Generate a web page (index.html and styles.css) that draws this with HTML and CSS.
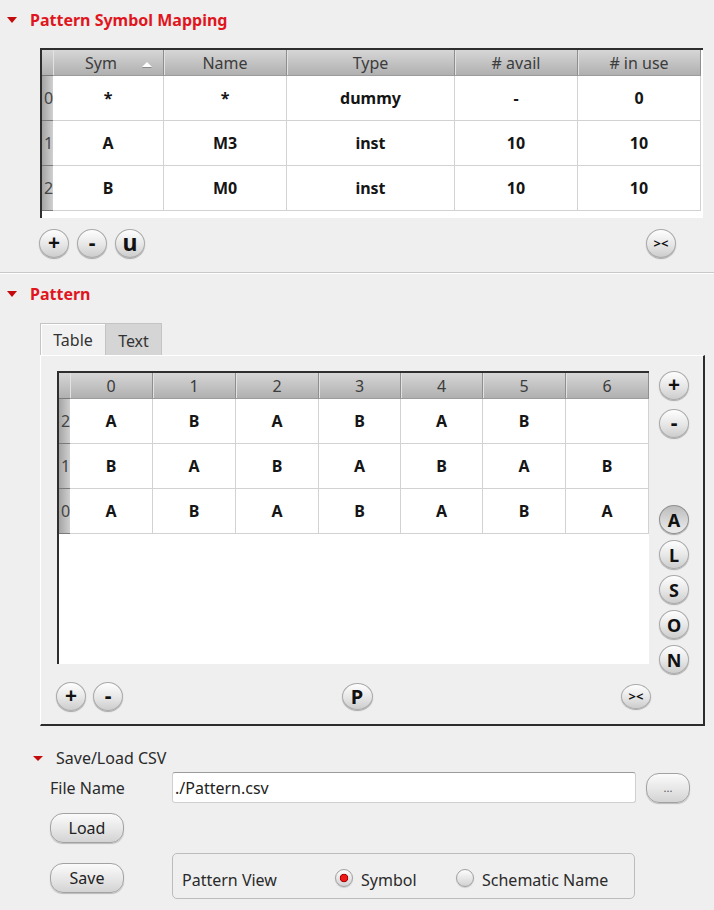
FILE: index.html
```html
<!DOCTYPE html>
<html>
<head>
<meta charset="utf-8">
<title>Pattern</title>
<link rel="stylesheet" href="styles.css">
</head>
<body>
<section class="sec">
  <div class="sec-head"><span class="tri"></span><span class="sec-title">Pattern Symbol Mapping</span></div>
  <div class="frame map-frame">
    <div class="grid map-grid">
      <div class="hcell corner"></div>
      <div class="hcell sortcol">Sym<span class="sort"></span></div>
      <div class="hcell">Name</div>
      <div class="hcell">Type</div>
      <div class="hcell"># avail</div>
      <div class="hcell"># in use</div>

      <div class="rh">0</div>
      <div class="cell">*</div><div class="cell">*</div><div class="cell">dummy</div><div class="cell">-</div><div class="cell">0</div>
      <div class="rh">1</div>
      <div class="cell">A</div><div class="cell">M3</div><div class="cell">inst</div><div class="cell">10</div><div class="cell">10</div>
      <div class="rh">2</div>
      <div class="cell">B</div><div class="cell">M0</div><div class="cell">inst</div><div class="cell">10</div><div class="cell">10</div>
    </div>
  </div>
  <div class="btn-row">
    <span class="rbtn sym">+</span>
    <span class="rbtn sym">-</span>
    <span class="rbtn big">u</span>
    <span class="rbtn swap push">&gt;&lt;</span>
  </div>
</section>

<div class="sep"></div>

<section class="sec">
  <div class="sec-head"><span class="tri"></span><span class="sec-title">Pattern</span></div>
  <div class="tabs">
    <div class="tab on">Table</div>
    <div class="tab off">Text</div>
  </div>
  <div class="pane">
    <div class="pane-main">
      <div class="frame pat-frame">
        <div class="grid pat-grid">
          <div class="hcell corner"></div>
          <div class="hcell">0</div><div class="hcell">1</div><div class="hcell">2</div><div class="hcell">3</div><div class="hcell">4</div><div class="hcell">5</div><div class="hcell">6</div>

          <div class="rh">2</div>
          <div class="cell">A</div><div class="cell">B</div><div class="cell">A</div><div class="cell">B</div><div class="cell">A</div><div class="cell">B</div><div class="cell"></div>
          <div class="rh">1</div>
          <div class="cell">B</div><div class="cell">A</div><div class="cell">B</div><div class="cell">A</div><div class="cell">B</div><div class="cell">A</div><div class="cell">B</div>
          <div class="rh">0</div>
          <div class="cell">A</div><div class="cell">B</div><div class="cell">A</div><div class="cell">B</div><div class="cell">A</div><div class="cell">B</div><div class="cell">A</div>
        </div>
      </div>
      <div class="pane-btns">
        <div class="grp-left">
          <span class="rbtn sym">+</span>
          <span class="rbtn sym">-</span>
        </div>
        <span class="rbtn oval">P</span>
        <div class="grp-right">
          <span class="rbtn swap oval-s">&gt;&lt;</span>
        </div>
      </div>
    </div>
    <div class="pane-side">
      <span class="rbtn sym">+</span>
      <span class="rbtn sym minus2">-</span>
      <span class="rbtn pressed letter-first">A</span>
      <span class="rbtn letter">L</span>
      <span class="rbtn letter">S</span>
      <span class="rbtn letter">O</span>
      <span class="rbtn letter">N</span>
    </div>
  </div>

  <div class="csv-head"><span class="tri small"></span><span class="csv-title">Save/Load CSV</span></div>
  <div class="file-row">
    <span class="lbl">File Name</span>
    <div class="input">./Pattern.csv</div>
    <span class="pill dots">...</span>
  </div>
  <div class="load-row"><span class="pill">Load</span></div>
  <div class="save-row">
    <span class="pill save">Save</span>
    <div class="group">
      <span class="group-lbl">Pattern View</span>
      <span class="radio-opt first"><span class="radio on"></span>Symbol</span>
      <span class="radio-opt"><span class="radio"></span>Schematic Name</span>
    </div>
  </div>
</section>
</body>
</html>
```

FILE: styles.css
```css
* { box-sizing: border-box; }
html, body { margin: 0; padding: 0; }
body {
  width: 714px;
  height: 910px;
  overflow: hidden;
  background: #efefef;
  font-family: "Noto Sans", "DejaVu Sans", sans-serif;
  font-size: 16px;
  color: #222;
}

.sec-head { display: flex; align-items: center; height: 40px; }
.tri {
  width: 0; height: 0;
  border-left: 5.5px solid transparent;
  border-right: 5.5px solid transparent;
  border-top: 6px solid #c40a0a;
  margin-left: 7px;
  margin-right: 13px;
}
.tri.small {
  border-left-width: 5px;
  border-right-width: 5px;
  border-top-width: 5px;
  margin-left: 33px;
  margin-right: 13px;
}
.sec-title { color: #e0161e; font-weight: bold; font-size: 16px; }

/* tables */
.frame {
  border-top: 2px solid #2e2e2e;
  border-left: 2px solid #2e2e2e;
  background: #fff;
}
.map-frame { margin: 8px 0 0 40px; width: 663px; height: 170px; }
.grid { display: grid; }
.map-grid {
  grid-template-columns: 11px 111px 123px 168px 123px 123px;
  grid-template-rows: 26px repeat(3, 45px);
}
.hcell {
  background: linear-gradient(#d6d6d6, #b0b0b0);
  border-right: 1px solid #8e8e8e;
  border-bottom: 1px solid #9c9c9c;
  box-shadow: inset 1px 0 0 #e2e2e2;
  display: flex;
  align-items: center;
  justify-content: center;
  color: #3c3c3c;
  font-size: 16px;
  position: relative;
}
.hcell.corner { border-right: none; box-shadow: none; border-bottom: 1px solid #7a7a7a; }
.sortcol { padding-right: 14px; }
.sort {
  position: absolute;
  right: 11px;
  top: 12px;
  width: 0; height: 0;
  border-left: 5.5px solid transparent;
  border-right: 5.5px solid transparent;
  border-bottom: 5px solid #fff;
  filter: drop-shadow(0 1px 0 #8a8a8a);
}
.rh {
  background: linear-gradient(to right, #a4a4a4, #d0d0d0);
  border-bottom: 1px solid #7a7a7a;
  color: #444;
  font-size: 16px;
  overflow: hidden;
  display: flex;
  align-items: center;
  padding-left: 2px;
}
.cell {
  border-right: 1px solid #d2d2d2;
  border-bottom: 1px solid #d2d2d2;
  display: flex;
  align-items: center;
  justify-content: center;
  font-weight: bold;
  color: #151515;
}

/* round buttons */
.rbtn {
  width: 30px;
  height: 29px;
  border-radius: 50%;
  border: 1px solid #a9a9a9;
  background: linear-gradient(#fefefe, #e6e6e6 55%, #cdcdcd);
  box-shadow: 0 1px 1px rgba(0, 0, 0, 0.3);
  display: flex;
  align-items: center;
  justify-content: center;
  font-weight: bold;
  font-size: 18px;
  color: #111;
  line-height: 1;
}
.rbtn.sym { font-size: 21px; padding-bottom: 2px; }
.rbtn.big { font-size: 23px; padding-bottom: 3px; }
.rbtn.swap { font-size: 13px; letter-spacing: 0; padding: 0 0 1px 0; }
.rbtn.pressed {
  background: linear-gradient(#bcbcbc, #dadada 60%, #ececec);
  border-color: #8f8f8f;
}
.btn-row {
  display: flex;
  gap: 8px;
  margin: 11px 0 0 39px;
  width: 637px;
}
.push { margin-left: auto; }

.sep {
  margin-top: 14px;
  height: 2px;
  border-top: 1px solid #c8c8c8;
  border-bottom: 1px solid #fff;
}

/* tabs */
.tabs { display: flex; margin: 9px 0 0 40px; height: 32px; }
.tab {
  height: 32px;
  border: 1px solid #c4c4c4;
  border-bottom: none;
  display: flex;
  align-items: center;
  justify-content: center;
  color: #333;
}
.tab.on { width: 66px; background: #f1f1f1; box-shadow: inset 1px 1px 0 #fff; }
.tab.off { width: 56px; background: #d5d5d5; border-left: none; padding-top: 3px; }

.pane {
  margin-left: 40px;
  width: 665px;
  height: 371px;
  border-top: 1px solid #fff;
  border-left: 1px solid #fff;
  border-right: 2px solid #2c2c2c;
  border-bottom: 2px solid #2c2c2c;
  padding: 15px 14px 0 16px;
  display: flex;
  gap: 10px;
}
.pane-main { width: 592px; display: flex; flex-direction: column; }
.pat-frame { width: 592px; height: 293px; }
.pat-grid {
  grid-template-columns: 11px 83px 83px 83px 82px 82px 83px 83px;
  grid-template-rows: 26px repeat(3, 45px);
}
.pane-btns {
  display: grid;
  grid-template-columns: 1fr auto 1fr;
  align-items: center;
  margin: 18px -2px 0 -1px;
}
.grp-left { display: flex; gap: 7px; }
.grp-right { display: flex; justify-content: flex-end; }
.rbtn.oval { width: 31px; height: 27px; margin-left: 7px; font-size: 20px; }
.rbtn.oval-s { width: 30px; height: 25px; }

.pane-side { width: 30px; display: flex; flex-direction: column; align-items: center; }
.minus2 { margin-top: 9px; }
.letter-first { margin-top: 67px; }
.letter { margin-top: 6px; }

/* csv */
.csv-head { display: flex; align-items: center; height: 24px; margin-top: 20px; }
.csv-title { color: #2a2a2a; }
.file-row { display: flex; align-items: center; height: 31px; margin: 2px 0 0 50px; }
.lbl { width: 122px; color: #2a2a2a; }
.input {
  width: 464px;
  height: 31px;
  background: #fff;
  border: 1px solid #d0d0d0;
  border-top-color: #9c9c9c;
  border-radius: 3px;
  padding-left: 2px;
  display: flex;
  align-items: center;
  color: #222;
}
.pill {
  width: 74px;
  height: 30px;
  border-radius: 13px;
  border: 1px solid #a2a2a2;
  background: linear-gradient(#fbfbfb, #e6e6e6 55%, #d3d3d3);
  box-shadow: 0 1px 1px rgba(0, 0, 0, 0.22);
  display: flex;
  align-items: center;
  justify-content: center;
  color: #222;
}
.pill.dots { width: 44px; margin-left: 10px; font-size: 11px; color: #555; }
.load-row { margin: 10px 0 0 50px; display: flex; }
.save-row { display: flex; align-items: flex-start; height: 46px; margin: 10px 0 0 50px; }
.pill.save { margin-top: 10px; }
.group {
  margin-left: 48px;
  width: 463px;
  height: 46px;
  border: 1px solid #bcbcbc;
  border-radius: 5px;
  display: flex;
  align-items: center;
  padding: 7px 0 0 9px;
}
.group-lbl { width: 153px; color: #2a2a2a; }
.radio-opt { display: flex; align-items: center; gap: 8px; color: #2a2a2a; }
.radio-opt.first { width: 121px; }
.radio {
  width: 18px;
  height: 18px;
  border-radius: 50%;
  border: 1px solid #a0a0a0;
  background: linear-gradient(#fdfdfd, #d2d2d2);
  box-shadow: 0 1px 1px rgba(0, 0, 0, 0.15);
  margin-top: -3px;
}
.radio.on {
  background: radial-gradient(circle, #ee1a1a 0 3px, #9a0000 3.8px, transparent 4.6px), linear-gradient(#fdfdfd, #d2d2d2);
}
```
